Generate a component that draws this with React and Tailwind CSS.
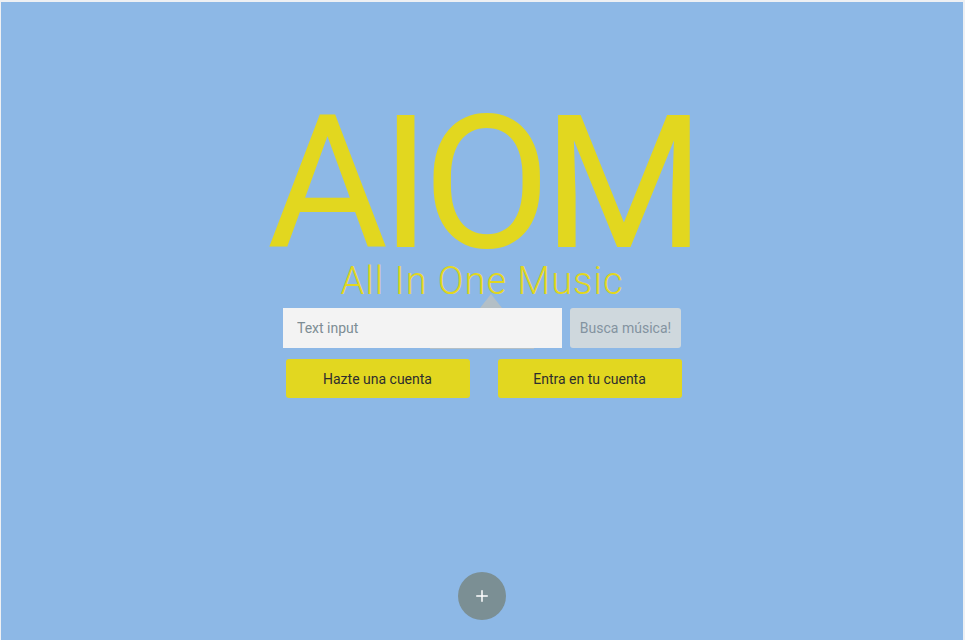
import { Plus } from 'lucide-react';

export default function App() {
  return (
    <div className="w-[965px] h-[640px] bg-[#eef0f3] pt-[2px] pl-[1px] pr-[2px] overflow-hidden font-['Roboto',sans-serif]">
      <div className="relative h-full bg-[#8db8e6] flex flex-col items-center">
        {/* Title */}
        <h1 className="mt-[88px] text-[186px] leading-none font-normal text-[#e2d71f] tracking-[-8px]">
          AIOM
        </h1>
        <p className="-mt-[14px] text-[38px] leading-none font-light text-[#e2d71f] tracking-[1px]">
          All In One Music
        </p>

        {/* Search */}
        <div className="relative mt-[8px] flex gap-2">
          {/* tooltip peeking behind the input */}
          <div className="absolute left-[197px] -top-[14px] w-0 h-0 border-x-[11px] border-x-transparent border-b-[14px] border-b-[#b3bfc6]" />
          <div className="absolute left-[147px] top-[38px] w-[104px] h-[3px] bg-[#b3bfc6]" />
          <input
            placeholder="Text input"
            className="relative w-[279px] h-10 bg-[#f3f3f3] px-[14px] text-sm text-[#37474f] placeholder:text-[#7d8d94] outline-none"
          />
          <button className="w-[111px] h-10 rounded-[3px] bg-[#cfd8dd] text-sm text-[#8393a0]">
            Busca música!
          </button>
        </div>

        {/* Account buttons */}
        <div className="mt-[11px] ml-[3px] flex gap-[28px]">
          <button className="w-[184px] h-[39px] rounded-[3px] bg-[#e2d720] text-sm text-[#2e2e2e]">
            Hazte una cuenta
          </button>
          <button className="w-[184px] h-[39px] rounded-[3px] bg-[#e2d720] text-sm text-[#2e2e2e]">
            Entra en tu cuenta
          </button>
        </div>

        {/* Floating action button */}
        <button className="absolute bottom-[20px] left-[457px] w-12 h-12 rounded-full bg-[#7b8f94] flex items-center justify-center text-white">
          <Plus className="w-[18px] h-[18px]" strokeWidth={2} />
        </button>
      </div>
    </div>
  );
}
